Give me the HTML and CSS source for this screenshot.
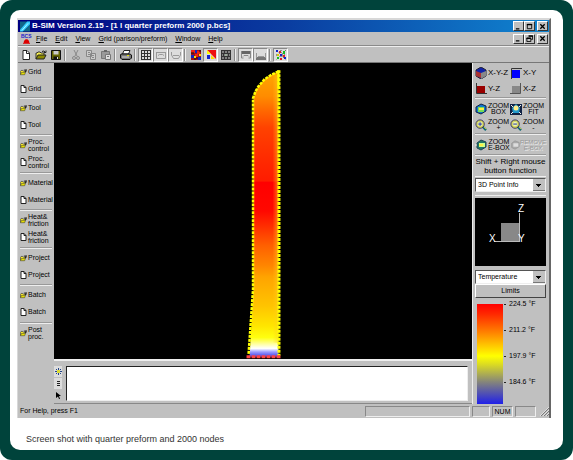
FILE: index.html
```html
<!DOCTYPE html>
<html lang="en">
<head>
<meta charset="utf-8">
<title>B-SIM Version 2.15</title>
<link rel="stylesheet" href="styles.css">
</head>
<body>
<svg class="sprites" aria-hidden="true">
  <symbol id="new" viewBox="0 0 10 10"><path d="M2 .5h4l2.500 2.500v6.500h-6.500z" fill="#fff" stroke="#222"/><path d="M5.500 1v2.500h3" fill="none" stroke="#222"/></symbol>
  <symbol id="open" viewBox="0 0 12 10"><path d="M1 9V3h1l1-1h2l1 1h3v2" fill="#f5ee50" stroke="#333"/><path d="M1 9l2-4h8L9 9z" fill="#8c8a00" stroke="#222"/><path d="M7 1.500q2-1.500 3.500 1M9 2.500h2v-2" fill="none" stroke="#222"/></symbol>
  <symbol id="doc" viewBox="0 0 7 8"><path d="M1 .5h3l2 2v5H1z" fill="#fff" stroke="#222"/><path d="M4 .5v2h2" fill="none" stroke="#222"/></symbol>
  <symbol id="folder" viewBox="0 0 9 8"><path d="M.5 7V3l1-1h2l1 1H7v2" fill="#ffef30" stroke="#444"/><path d="M.5 7.500L2 4.500h5L6 7.500z" fill="#e8e000" stroke="#333" stroke-width=".7"/><path d="M5 1.500h3M8 .5v3M7 2v2" stroke="#111" fill="none"/></symbol>
  <symbol id="min" viewBox="0 0 8 8"><path d="M1 6h4v1.500H1z"/></symbol>
  <symbol id="max" viewBox="0 0 8 8"><path d="M1.500 1.500h5v5h-5z" fill="none" stroke="#000"/><path d="M1 1h6v1.500H1z"/></symbol>
  <symbol id="restore" viewBox="0 0 8 8"><path d="M3 1h4.500v4H6M1 3.500h4.500v4H1z" fill="none" stroke="#000"/><path d="M3 .5h5V2H3zM.5 3h5v1.500h-5z"/></symbol>
  <symbol id="close" viewBox="0 0 8 8"><path d="M1.500 1.500l5 5M6.500 1.500l-5 5" stroke="#000" stroke-width="1.500"/></symbol>
  <symbol id="lens" viewBox="0 0 13 13"><path d="M8 8l4 4" stroke="#167" stroke-width="2.500"/><path d="M9 8l3 3" stroke="#dd3"/><circle cx="5.500" cy="5.500" r="4.500" fill="#f0f040" stroke="#226"/><circle cx="5.500" cy="5.500" r="3" fill="#eef6b0" stroke="#aa5" stroke-width=".5"/></symbol>
</svg>
<div class="frame">
<main class="window">
  <header class="titlebar">
    <svg class="app-icon" viewBox="0 0 11 11"><path d="M0 0h11v11H0z" fill="#168"/><path d="M0 9L8 0h3v3L3 11H0z" fill="#3cf"/><path d="M2 10L9 2" stroke="#bff"/></svg>
    <h1>B-SIM Version 2.15 - [1 l quarter preform 2000 p.bcs]</h1>
    <div class="controls">
      <button aria-label="Minimize"><svg><use href="#min"/></svg></button><button aria-label="Maximize"><svg><use href="#max"/></svg></button><button class="apart" aria-label="Close"><svg><use href="#close"/></svg></button>
    </div>
  </header>
  <nav class="menubar">
    <span class="doc-icon"><b>BCS</b><svg viewBox="0 0 8 5"><path d="M1 4V2l2-2h2l2 2v2h1v1H0V4z" fill="#d00"/></svg></span>
    <button><u>F</u>ile</button><button><u>E</u>dit</button><button><u>V</u>iew</button><button><u>G</u>rid (parison/preform)</button><button><u>W</u>indow</button><button><u>H</u>elp</button>
    <div class="controls">
      <button aria-label="Minimize document"><svg><use href="#min"/></svg></button><button aria-label="Restore document"><svg><use href="#restore"/></svg></button><button class="apart" aria-label="Close document"><svg><use href="#close"/></svg></button>
    </div>
  </nav>
  <div class="toolbar">
    <button aria-label="New"><svg viewBox="0 0 10 10"><use href="#new"/></svg></button>
    <button aria-label="Open"><svg class="wide" viewBox="0 0 12 10"><use href="#open"/></svg></button>
    <button aria-label="Save"><svg viewBox="0 0 10 10"><path d="M.5.5h9v9h-9z" fill="#660" stroke="#111"/><path d="M2.500 1h5v3.500h-5z" fill="#ccc"/><path d="M2.500 6.500h5V10h-5z" fill="#111"/><path d="M6 7h1v2H6z" fill="#ddd"/></svg></button>
    <i></i>
    <button aria-label="Cut"><svg viewBox="0 0 10 10"><path d="M3 0l3 6M7 0L4 6" stroke="#888" fill="none"/><circle cx="3" cy="8" r="1.500" fill="none" stroke="#888"/><circle cx="7" cy="8" r="1.500" fill="none" stroke="#888"/></svg></button>
    <button aria-label="Copy"><svg viewBox="0 0 10 10"><path d="M.5.5h5v6h-5zM4.500 3.500h5v6h-5z" fill="#ccc" stroke="#888"/><path d="M2 2.500h2M2 4.500h2M6 5.500h2M6 7.500h2" stroke="#888"/></svg></button>
    <button aria-label="Paste"><svg viewBox="0 0 10 10"><path d="M.5 1.500h8v7h-8z" fill="#999" stroke="#777"/><path d="M3 0h3v2H3z" fill="#666"/><path d="M4.500 4.500h5v5h-5z" fill="#ddd" stroke="#777"/><path d="M6 6.500h2" stroke="#777"/></svg></button>
    <i></i>
    <button aria-label="Print"><svg class="wide" viewBox="0 0 12 10"><path d="M4 .5h6L8.500 4h-6z" fill="#fff" stroke="#222"/><path d="M1 4h9l1.500 1v3L10 9.500H2L.5 8V5z" fill="#777" stroke="#111"/><path d="M2 7h7" stroke="#ddd"/><path d="M7 5.500h2" stroke="#dd0"/></svg></button>
    <i></i>
    <button class="pressed" aria-label="Grid"><svg viewBox="0 0 10 10"><path d="M.5 0v10M3.500 0v10M6.500 0v10M9.500 0v10M0 .5h10M0 3.500h10M0 6.500h10M0 9.500h10" stroke="#333"/></svg></button>
    <button class="pressed" aria-label="Upper grid"><svg viewBox="0 0 10 10"><path d="M.5 2v6.500h9V2M1 2.500h8M2 5.500l1.500-1h3l1.500 1" fill="none" stroke="#999"/></svg></button>
    <button class="pressed" aria-label="Lower grid"><svg viewBox="0 0 10 10"><path d="M.5 2v3l2 3.500h5l2-3.500V2M2 5.500h6" fill="none" stroke="#999"/></svg></button>
    <i></i>
    <button aria-label="Color map"><svg viewBox="0 0 10 10"><path d="M0 0h10v10H0z" fill="#a01018"/><path d="M0 0h4v3H0zM6 1h3v3H6zM4 4h3v3H4z" fill="#e21"/><path d="M4 0h2v3H4zM0 5h3v3H0zM7 7h3v3H7z" fill="#12b"/><path d="M3 6h2v2H3zM8 4h2v2H8z" fill="#fd0"/><path d="M0 3h3M5 8h2M3 9h2M8 1h2" stroke="#111"/></svg></button>
    <button class="pressed" aria-label="Shaded"><svg viewBox="0 0 10 10"><path d="M1 0h9v9z" fill="#e11"/><path d="M1 0v4h4z" fill="#ff0"/><path d="M1 5h3v4H1z" fill="#12c"/><path d="M5 5l4 4H5z" fill="#fd0"/></svg></button>
    <button aria-label="Mesh"><svg viewBox="0 0 10 10"><path d="M0 0h10v10H0z" fill="#333"/><path d="M1 2h2M4 2h2M7 2h2M1 5h1M3 5h1M6 5h1M8 5h1M1 8h2M4 8h2M7 8h2" stroke="#ccc"/><path d="M4 4h2v2H4z" fill="#9a9"/></svg></button>
    <i></i>
    <button class="pressed" aria-label="Top view"><svg viewBox="0 0 10 10"><path d="M0 1h10v3H0z" fill="#666"/><path d="M.5 1v7h2M9.500 1v7h-2M2 6.500l1-1h4l1 1" fill="none" stroke="#888"/></svg></button>
    <button class="pressed" aria-label="Bottom view"><svg viewBox="0 0 10 10"><path d="M0 7h10v3H0z" fill="#777"/><path d="M.5 3v5M9.500 3v5M2 6.500h6" fill="none" stroke="#999"/></svg></button>
    <i></i>
    <button class="pressed" aria-label="Nodes"><svg viewBox="0 0 10 10"><path d="M0 0l10 10M10 0L0 10M5 0v10M0 5h10" stroke="#444" stroke-dasharray="1 1"/><path d="M0 0h2v2H0zM4 4h2v2H4zM8 7h2v2H8z" fill="#12c"/><path d="M7 1h2v3H7zM1 7h2v2H1z" fill="#1b2"/><path d="M3 1h2v2H3zM7 5h2v2H7zM4 8h2v2H4z" fill="#d22"/><path d="M1 4h2v2H1z" fill="#dc0"/></svg></button>
  </div>
  <div class="workspace">
    <aside class="sidebar">
      <div class="group"><button><svg><use href="#folder"/></svg><span>Grid</span></button><button><svg><use href="#doc"/></svg><span>Grid</span></button></div>
      <div class="group"><button><svg><use href="#folder"/></svg><span>Tool</span></button><button><svg><use href="#doc"/></svg><span>Tool</span></button></div>
      <div class="group"><button><svg><use href="#folder"/></svg><span>Proc.<br>control</span></button><button><svg><use href="#doc"/></svg><span>Proc.<br>control</span></button></div>
      <div class="group"><button><svg><use href="#folder"/></svg><span>Material</span></button><button><svg><use href="#doc"/></svg><span>Material</span></button></div>
      <div class="group"><button><svg><use href="#folder"/></svg><span>Heat&amp;<br>friction</span></button><button><svg><use href="#doc"/></svg><span>Heat&amp;<br>friction</span></button></div>
      <div class="group"><button><svg><use href="#folder"/></svg><span>Project</span></button><button><svg><use href="#doc"/></svg><span>Project</span></button></div>
      <div class="group"><button><svg><use href="#folder"/></svg><span>Batch</span></button><button><svg><use href="#doc"/></svg><span>Batch</span></button></div>
      <div class="group"><button><svg><use href="#folder"/></svg><span>Post<br>proc.</span></button></div>
    </aside>
    <div class="center">
      <div class="viewport">
        <svg viewBox="54 63 419 296" role="img" aria-label="Preform temperature map">
          <defs>
            <linearGradient id="heat" gradientUnits="userSpaceOnUse" x1="0" y1="70" x2="0" y2="358">
              <stop offset="0" stop-color="#ffa800"/><stop offset=".09" stop-color="#ff8c00"/><stop offset=".14" stop-color="#ff6800"/><stop offset=".2" stop-color="#ff4200"/><stop offset=".3" stop-color="#ff2c00"/><stop offset=".385" stop-color="#ff1c00"/><stop offset=".39" stop-color="#f00"/><stop offset=".49" stop-color="#ff0800"/><stop offset=".54" stop-color="#ff2c00"/><stop offset=".61" stop-color="#ff6000"/><stop offset=".68" stop-color="#ff8600"/><stop offset=".72" stop-color="#ffa400"/><stop offset=".82" stop-color="#ffc400"/><stop offset=".89" stop-color="#ffe600"/><stop offset=".93" stop-color="#ffff10"/><stop offset=".955" stop-color="#ffffb0"/><stop offset=".968" stop-color="#fff"/><stop offset=".98" stop-color="#9a9aff"/><stop offset="1" stop-color="#3030e0"/>
            </linearGradient>
            <linearGradient id="rim"><stop offset="0" stop-color="#ffd020" stop-opacity="0"/><stop offset="1" stop-color="#ffd020" stop-opacity=".55"/></linearGradient>
          </defs>
          <path d="M279 71L271 75 265 79 259 86 256 91 254 98V290L250 357h29z" fill="url(#heat)"/>
          <path d="M273 75h6v268h-6z" fill="url(#rim)"/>
          <path d="M279 71L271 75 265 79 259 86 256 91 253.500 98V290L249 355" fill="none" stroke="#ff0" stroke-width="2.500" stroke-dasharray="3 1"/>
          <path d="M279.500 70v286" stroke="#ff0" stroke-width="3" stroke-dasharray="3 1"/><path d="M279 70v18" stroke="#ff0" stroke-width="2"/>
          <path d="M247 357h34" stroke="#f44" stroke-width="3" stroke-dasharray="4 1"/>
        </svg>
      </div>
      <div class="output">
        <div class="output-tools">
          <button class="on" aria-label="Nodes"><svg viewBox="0 0 7 7"><path d="M3.500 0v7M0 3.500h7M1 1l5 5M6 1L1 6" stroke="#248"/><path d="M2 2h3v3H2z" fill="#dd3"/></svg></button>
          <button class="on" aria-label="List"><svg viewBox="0 0 7 7"><path d="M2 1.500h3M2 3.500h3M2 5.500h3" stroke="#222"/></svg></button>
          <button aria-label="Pointer"><svg viewBox="0 0 7 7"><path d="M1 0l5 4H4l1 3H4L3 4.500 1 6z"/></svg></button>
        </div>
        <textarea aria-label="Messages"></textarea>
      </div>
    </div>
    <aside class="panel">
      <div class="tools axes">
        <button><svg viewBox="0 0 12 12"><path d="M6 0l5 3v6l-5 3-5-3V3z" fill="#12a" stroke="#223"/><path d="M1 4l5 2v5L1 9z" fill="#a33"/><path d="M6 6l5-2v5l-5 3z" fill="#888"/></svg>X-Y-Z</button>
        <button><svg viewBox="0 0 12 12"><path d="M2 3h8v8H2z" fill="#00f"/><path d="M1.500 12V1.500H12" stroke="#333" fill="none"/></svg>X-Y</button>
        <button><svg viewBox="0 0 12 12"><path d="M2 3h8v7H2z" fill="#900"/><path d="M1.500 0v10.500H12" stroke="#333" fill="none"/></svg>Y-Z</button>
        <button><svg viewBox="0 0 12 12"><path d="M2 3h8v7H2z" fill="#888"/><path d="M10.500 0v10.500H0" stroke="#555" fill="none"/></svg>X-Z</button>
      </div>
      <div class="tools">
        <button><svg viewBox="0 0 12 12"><path d="M1 4l5-3 5 2v5l-5 3-5-2z" fill="#17c" stroke="#124"/><path d="M3 4h6v5H3z" fill="#7d5"/><path d="M4 5h5v2H4z" fill="#fe4"/></svg><span>ZOOM<br>BOX</span></button>
        <button><svg viewBox="0 0 12 12"><path d="M0 1h12v11H0z" fill="#124"/><path d="M2 5l4-4 4 4-1 5H3z" fill="#29c"/><circle cx="6" cy="5" r="2.500" fill="#fe8"/><path d="M1 2l2 2M11 2L9 4M1 11l2-2M11 11L9 9" stroke="#eee"/></svg><span>ZOOM<br>FIT</span></button>
        <button><svg viewBox="0 0 13 13"><use href="#lens"/><path d="M3.500 5.500h4M5.500 3.500v4" stroke="#12a"/></svg><span>ZOOM<br>+</span></button>
        <button><svg viewBox="0 0 13 13"><use href="#lens"/><path d="M3.500 5.500h4" stroke="#12a"/></svg><span>ZOOM<br>-</span></button>
      </div>
      <div class="tools ebox">
        <button><svg viewBox="0 0 12 12"><path d="M2 4l4-3 5 2v5l-5 3-4-2z" fill="#276" stroke="#245"/><path d="M4 4h6v4H4z" fill="#cf8"/><path d="M4 5h4v2H4z" fill="#fe4"/><path d="M0 6h2" stroke="#eee"/></svg><span>ZOOM<br>E-BOX</span></button>
        <button disabled><svg viewBox="0 0 12 12"><path d="M2 4l4-3 5 2v5l-5 3-4-2z" fill="#aaa" stroke="#999"/><path d="M4 4h6v4H4z" fill="#ddd"/></svg><span>REMOVE<br>E-BOX</span></button>
      </div>
      <label for="mouse">Shift + Right mouse<br>button function</label>
      <div class="pick"><select id="mouse"><option>3D Point Info</option></select></div>
      <svg class="triad" viewBox="0 0 71 68" role="img" aria-label="View axes"><path d="M0 0h71v68H0z"/><path d="M26 25h19v18H26z" fill="#888"/><path d="M44.500 15v28M19 43.500h26" stroke="#bbb" fill="none"/><g fill="#fff" font-size="10"><text x="43" y="14">Z</text><text x="14" y="44">X</text><text x="43" y="44">Y</text></g></svg>
      <div class="scale-tools">
        <select aria-label="Quantity"><option>Temperature</option></select>
        <button class="limits">Limits</button>
      </div>
      <div class="legend">
        <div class="ramp"></div>
        <ul><li>224.5 °F</li><li>211.2 °F</li><li>197.9 °F</li><li>184.6 °F</li></ul>
      </div>
    </aside>
  </div>
  <footer class="status">
    <span class="hint">For Help, press F1</span><span class="pane long"></span><span class="pane"></span><span class="pane num">NUM</span><span class="pane num"></span>
    <svg class="grip" viewBox="0 0 9 9"><path d="M1 9l8-8M4 9l5-5M7 9l2-2" stroke="#777"/><path d="M0 9l9-9M3 9l6-6M6 9l3-3" stroke="#fff" stroke-width=".5"/></svg>
  </footer>
</main>
<p class="caption">Screen shot with quarter preform and 2000 nodes</p>
</div>
</body>
</html>
```
FILE: styles.css
```css
* { box-sizing: border-box; }
html { background: #fff; }
body { margin: 0; background: #00433b; border-radius: 12px; padding: 10px; min-height: 100vh; display: flex; font: 7px/8px "Liberation Sans", Arial, sans-serif; color: #000; }
.sprites { display: none; }
.frame { flex: 1; min-width: 0; background: #fff; border-radius: 10px; padding: 8px 12px 0 7px; }
button { font: inherit; color: inherit; background: none; border: 0; padding: 0; margin: 0; }
svg { display: block; flex: none; }

.window { background: #c0c0c0; border: solid; border-width: 2px 2px 0 1px; border-color: #d8d8d8 #666 #888 #d8d8d8; }

.titlebar { height: 12px; display: flex; align-items: center; gap: 2px; padding: 0 1px 0 2px; color: #fff; background: linear-gradient(90deg, #000082, #0a3ca0 50%, #1084d0); }
.app-icon { width: 10px; height: 11px; }
h1 { margin: 0; flex: 1; font-size: 8px; line-height: 10px; white-space: nowrap; }
.controls { display: flex; margin-left: auto; }
.controls button { width: 11px; height: 10px; background: #c0c0c0; border: 1px solid; border-color: #fff #333 #333 #fff; display: grid; place-items: center; }
.controls svg { width: 7px; height: 7px; }
.controls .apart { margin-left: 2px; }

.menubar { height: 13px; display: flex; align-items: center; gap: 8px; padding: 0 1px 0 3px; }
.doc-icon { display: grid; justify-items: center; color: #22c; font-size: 5px; line-height: 5px; width: 10px; margin-right: -3px; }
.doc-icon svg { width: 7px; height: 5px; }

.toolbar { height: 18px; border-top: 1px solid #8a8a8a; border-bottom: 1px solid #777; box-shadow: inset 0 1px #eee; padding-top: 1px; display: flex; align-items: center; }
.toolbar button { width: 15px; height: 14px; display: grid; place-items: center; }
.toolbar svg { width: 10px; height: 10px; }
.toolbar .wide { width: 12px; }
.toolbar .pressed { background: #dcdcdc; border: 1px solid; border-color: #888 #fff #fff #888; }
.toolbar i { width: 2px; height: 12px; margin: 0 2px 0 1px; border-left: 1px solid #888; border-right: 1px solid #eee; }

.workspace { display: grid; grid-template-columns: 36px minmax(0, 1fr) 76px; }
.sidebar { padding: 0 2px; }
.group { height: 38px; padding-bottom: 1px; border-bottom: 1px solid #eee; box-shadow: inset 0 -1px #999; }
.group:nth-child(even) { height: 37px; }
.group:first-child { height: 36px; }
.group:last-child { border: 0; box-shadow: none; }
.group button { display: flex; align-items: center; gap: 1px; text-align: left; width: 100%; height: 17px; line-height: 7px; white-space: nowrap; }
.group svg { width: 7px; height: 8px; }

.center { display: flex; flex-direction: column; border-right: 1px solid #eee; }
.viewport { background: #000; }
.viewport svg { width: 100%; height: 296px; }
.output { flex: 1; display: flex; gap: 4px; padding: 5px 4px 2px 0; border-top: 2px solid #eee; border-bottom: 1px solid #888; }
.output-tools { width: 8px; display: flex; flex-direction: column; gap: 1px; }
.output-tools button { height: 11px; display: grid; place-items: center; }
.output-tools .on { background: #ddd; }
.output-tools svg { width: 7px; height: 7px; }
textarea { flex: 1; resize: none; font: inherit; margin: 0; padding: 2px; height: 35px; background: #fff; border: solid; border-width: 1px; border-color: #222 #eee #eee #222; outline: 0; }

.panel { padding: 0 3px 0 2px; display: flex; flex-direction: column; }
.tools { display: grid; grid-template-columns: 35px 36px; grid-auto-rows: 16px; padding: 2px 0 1px; border-bottom: 1px solid #eee; box-shadow: inset 0 -1px #999; }
.tools button { display: flex; align-items: center; gap: 1px; line-height: 6px; white-space: nowrap; }
.tools svg { width: 12px; height: 12px; }
.axes { font-size: 8px; }
.ebox { grid-auto-rows: 18px; padding: 1px 0; }
.tools button:disabled { color: #999; text-shadow: 1px 1px #eee; gap: 0; font-size: 6px; }
.tools button:disabled svg { width: 10px; height: 10px; }
label { font-size: 8px; line-height: 9px; text-align: center; height: 21px; padding-top: 1px; white-space: nowrap; border-bottom: 1px solid #eee; }
select { appearance: none; display: block; width: 100%; height: 14px; font: inherit; color: #000; border-radius: 0; padding: 0 14px 0 2px; border: 1px solid; border-color: #555 #eee #eee #555; background: linear-gradient(#000, #000) right 4px top 5px / 5px 1px no-repeat, linear-gradient(#000, #000) right 5px top 6px / 3px 1px no-repeat, linear-gradient(#000, #000) right 6px top 7px / 1px 1px no-repeat, linear-gradient(#777, #777) right 0 bottom 0 / 12px 1px no-repeat, linear-gradient(#c0c0c0, #c0c0c0) right / 12px 12px no-repeat, #fff; }
.pick { padding: 1px 0 3px; border-bottom: 1px solid #eee; }
.triad { width: 100%; height: 68px; margin: 2px 0 4px; }
.limits { width: 100%; height: 14px; border: 1px solid; border-color: #fff #444 #444 #fff; display: block; }
.legend { display: flex; gap: 1px; margin: 6px 0 0 2px; }
.ramp { width: 26px; height: 100px; background: linear-gradient(#f00, #ff2800 10%, #ff8000 28%, #ff0 52%, #dddd20 60%, #808080 79%, #2020e8); }
ul { list-style: none; margin: -4px 0 0; padding: 0; display: grid; grid-auto-rows: 8px; row-gap: 18px; align-content: start; white-space: nowrap; }
li { display: flex; align-items: center; gap: 3px; }
li::before { content: ""; width: 2px; height: 1px; background: #222; }

.status { height: 14px; display: flex; align-items: center; gap: 2px; padding-left: 2px; }
.hint { flex: 1; }
.pane { width: 18px; height: 11px; line-height: 10px; text-align: center; border: 1px solid; border-color: #888 #eee #eee #888; }
.long { width: 105px; }
.num { width: 21px; }
.grip { width: 9px; height: 9px; margin-left: 2px; }
.caption { margin: 15px 9px 0; font-size: 9px; line-height: 12px; color: #333; }
```
